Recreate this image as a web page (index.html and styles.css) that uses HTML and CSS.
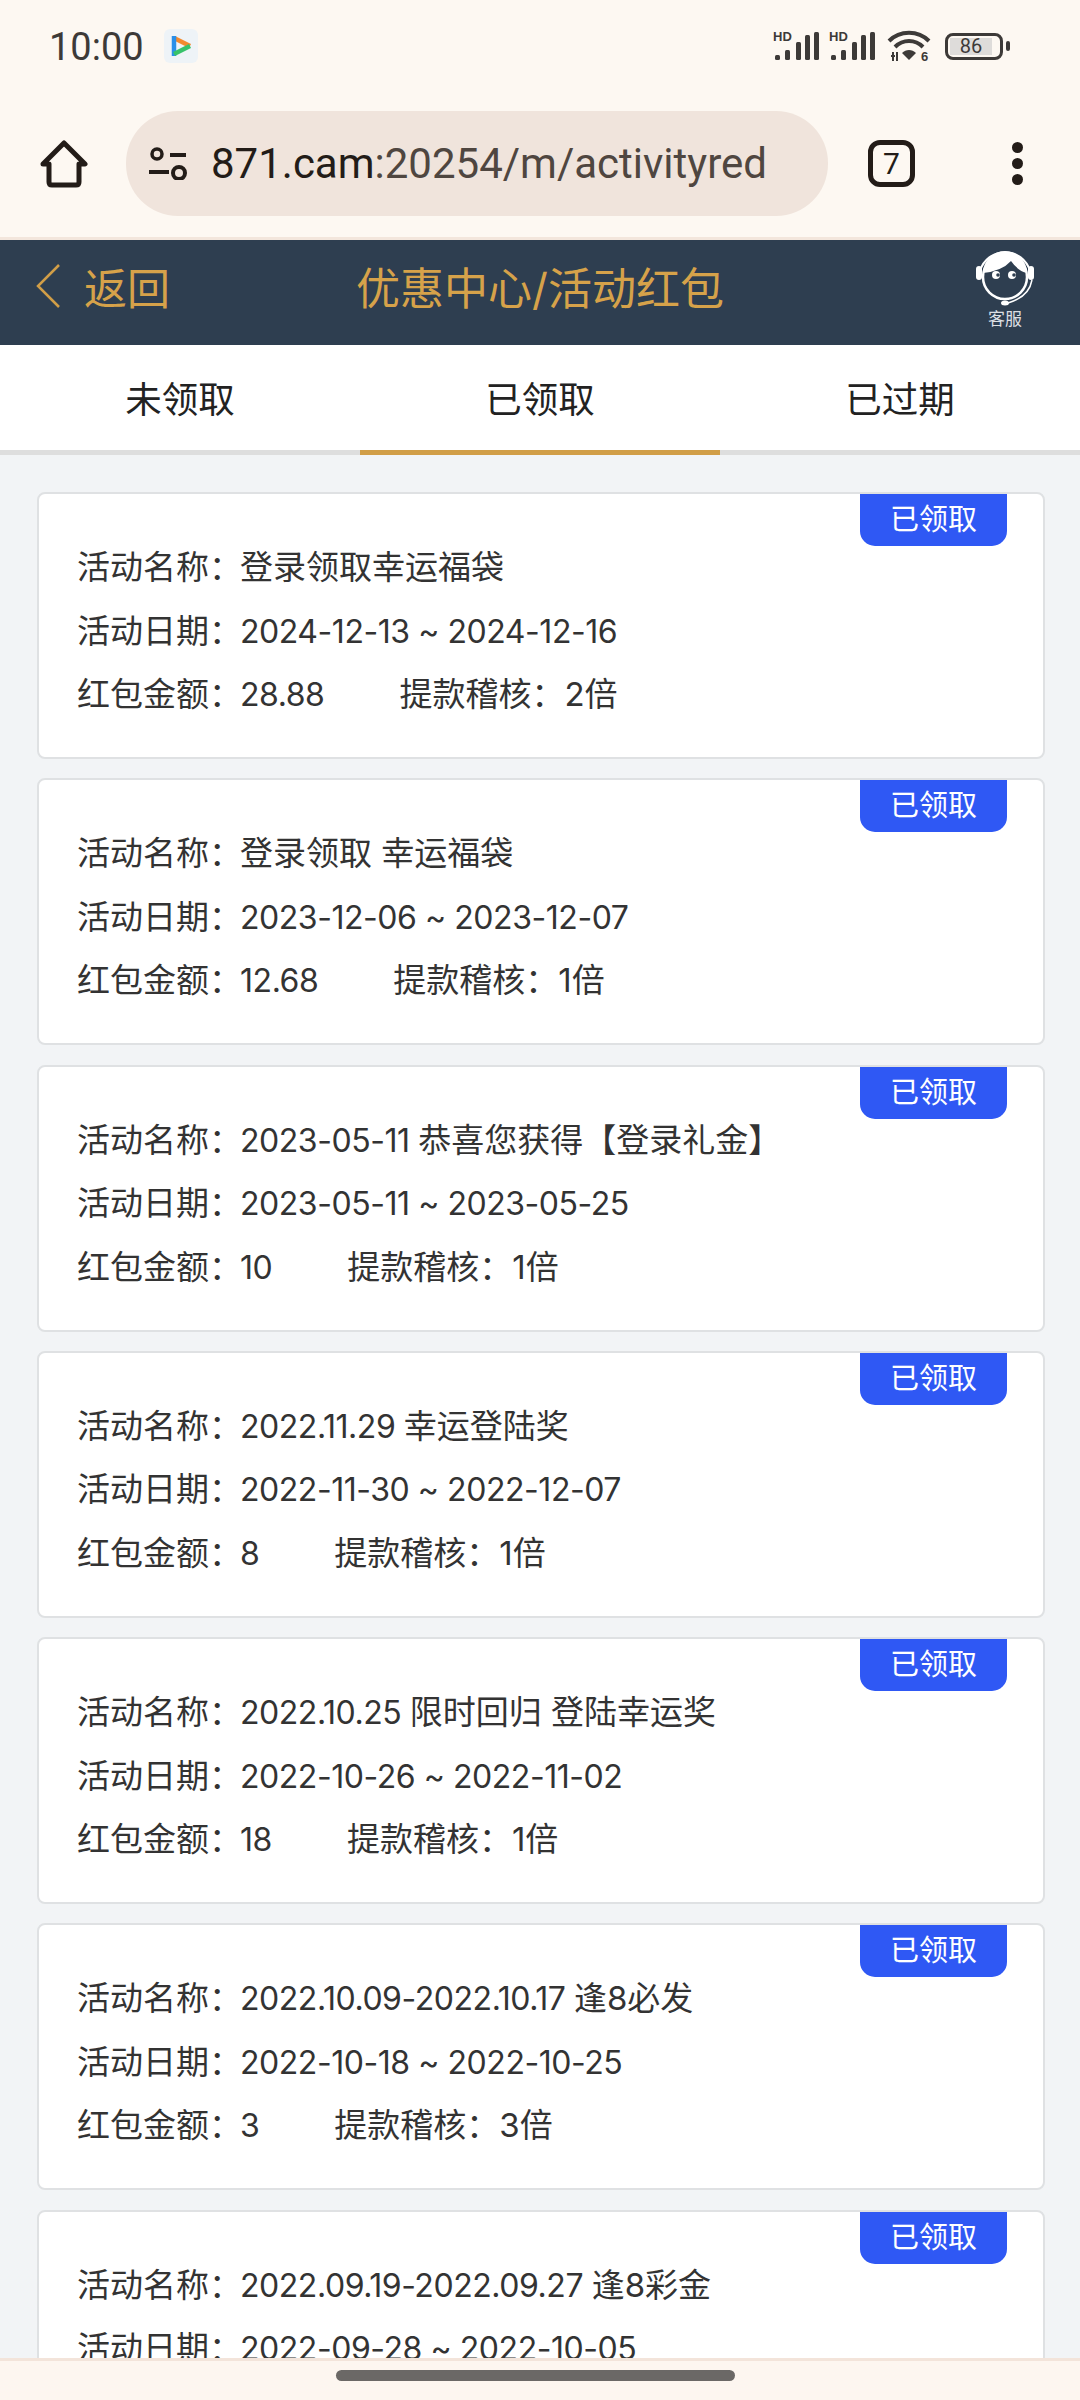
FILE: index.html
```html
<!DOCTYPE html>
<html lang="zh">
    <head>
        <meta charset="utf-8">
        <title>优惠中心/活动红包</title>
        <link rel="stylesheet" href="styles.css">
    </head>
    <body>
        <div class="phone">
            <div class="browser">
                <div class="status">
                    <span class="time">10:00</span>
                    <svg class="play" viewBox="0 0 34 34">
                        <rect width="34" height="34" rx="6" fill="#eef3f7"/>
                        <path d="M10 9L26 17" stroke="#f28a2e" stroke-width="4.5" fill="none"/>
                        <path d="M10 7V27" stroke="#2a8fe8" stroke-width="4.5" fill="none"/>
                        <path d="M10 25L26 17" stroke="#37c26a" stroke-width="4.5" fill="none"/>
                    </svg>
                    <div class="indicators">
                        <svg class="signal" viewBox="0 -2 46 32">
                            <text x="0" y="10" class="hd">HD</text>
                            <rect x="2" y="24" width="5" height="5" rx="1.5"/>
                            <rect x="12" y="19" width="5" height="10" rx="1.5"/>
                            <rect x="23" y="11" width="5" height="18" rx="1.5"/>
                            <rect x="32" y="4" width="5" height="25" rx="1.5"/>
                            <rect x="41" y="1" width="5" height="28" rx="1.5"/>
                        </svg>
                        <svg class="signal" viewBox="0 -2 46 32">
                            <text x="0" y="10" class="hd">HD</text>
                            <rect x="2" y="24" width="5" height="5" rx="1.5"/>
                            <rect x="12" y="19" width="5" height="10" rx="1.5"/>
                            <rect x="23" y="11" width="5" height="18" rx="1.5"/>
                            <rect x="32" y="4" width="5" height="25" rx="1.5"/>
                            <rect x="41" y="1" width="5" height="28" rx="1.5"/>
                        </svg>
                        <svg class="wifi" viewBox="0 0 44 36">
                            <path d="M2 11C13 0 31 0 42 11" fill="none" stroke="#3d3a38" stroke-width="4"/>
                            <path d="M8 17C16 9 28 9 36 17" fill="none" stroke="#3d3a38" stroke-width="4"/>
                            <path d="M15 23C19 19 25 19 29 23L22 30Z" fill="#3d3a38"/>
                            <path d="M4 26H8M6 22V31M10 22V31" stroke="#3d3a38" stroke-width="2" fill="none"/>
                            <text x="34" y="31" class="wifi-six">6</text>
                        </svg>
                        <div class="battery">
                            <span class="battery-level">86</span>
                        </div>
                        <span class="battery-tip"></span>
                    </div>
                </div>
                <div class="toolbar">
                    <svg class="home" viewBox="0 0 48 48">
                        <path d="M3 24L24 3L45 24H39V42Q39 45 36 45H12Q9 45 9 42V24Z" fill="none" stroke="#231c18" stroke-width="5" stroke-linejoin="round"/>
                    </svg>
                    <div class="urlbar">
                        <svg class="tune" viewBox="0 0 39 33">
                            <circle cx="9" cy="7" r="5" fill="none" stroke="#231c18" stroke-width="3.5"/>
                            <path d="M22 8H38" stroke="#231c18" stroke-width="4"/>
                            <path d="M1 25H21" stroke="#231c18" stroke-width="4"/>
                            <circle cx="31" cy="26" r="6" fill="none" stroke="#231c18" stroke-width="4"/>
                        </svg>
                        <span class="url"><b>871.cam</b>:20254/m/activityred</span>
                    </div>
                    <div class="tabcount">7</div>
                    <div class="dots"><i></i><i></i><i></i></div>
                </div>
            </div>

            <div class="header">
                <div class="back">
                    <svg class="chevron" viewBox="0 0 24 44">
                        <path d="M23 1L2 22L23 43" fill="none" stroke="#d19e47" stroke-width="2.5"/>
                    </svg>
                    <span>返回</span>
                </div>
                <div class="title">优惠中心/活动红包</div>
                <div class="service">
                    <svg class="agent" viewBox="0 0 60 60">
                        <path d="M5 24A26 26 0 0 1 55 24" fill="none" stroke="#fff" stroke-width="2"/>
                        <path d="M8 26A22 22 0 0 1 52 26Q43 24 36 14Q27 24 8 26Z" fill="#fff"/>
                        <circle cx="30" cy="30" r="22" fill="none" stroke="#fff" stroke-width="2.5"/>
                        <rect x="1" y="19" width="6" height="14" rx="3" fill="#fff"/>
                        <rect x="53" y="19" width="6" height="14" rx="3" fill="#fff"/>
                        <circle cx="21" cy="28" r="4" fill="#fff"/>
                        <circle cx="37" cy="28" r="4" fill="#fff"/>
                        <circle cx="23" cy="28" r="1.8" fill="#2e3e50"/>
                        <circle cx="39" cy="28" r="1.8" fill="#2e3e50"/>
                        <path d="M57 33Q54 50 33 56" fill="none" stroke="#fff" stroke-width="1.5"/>
                        <ellipse cx="30" cy="56" rx="4" ry="2.5" fill="#fff"/>
                    </svg>
                    <span class="service-label">客服</span>
                </div>
            </div>

            <div class="tabs">
                <div class="tab">未领取</div>
                <div class="tab active">已领取</div>
                <div class="tab">已过期</div>
            </div>

            <div class="list">
                <div class="card">
                    <span class="badge">已领取</span>
                    <p><span class="label">活动名称：</span><span class="cn">登录领取幸运福袋</span></p>
                    <p><span class="label">活动日期：</span>2024-12-13 ~ 2024-12-16</p>
                    <p><span class="label">红包金额：</span>28.88<span class="audit">提款稽核：2倍</span></p>
                </div>
                <div class="card">
                    <span class="badge">已领取</span>
                    <p><span class="label">活动名称：</span><span class="cn">登录领取 幸运福袋</span></p>
                    <p><span class="label">活动日期：</span>2023-12-06 ~ 2023-12-07</p>
                    <p><span class="label">红包金额：</span>12.68<span class="audit">提款稽核：1倍</span></p>
                </div>
                <div class="card">
                    <span class="badge">已领取</span>
                    <p><span class="label">活动名称：</span>2023-05-11 <span class="cn">恭喜您获得【登录礼金】</span></p>
                    <p><span class="label">活动日期：</span>2023-05-11 ~ 2023-05-25</p>
                    <p><span class="label">红包金额：</span>10<span class="audit">提款稽核：1倍</span></p>
                </div>
                <div class="card">
                    <span class="badge">已领取</span>
                    <p><span class="label">活动名称：</span>2022.11.29 <span class="cn">幸运登陆奖</span></p>
                    <p><span class="label">活动日期：</span>2022-11-30 ~ 2022-12-07</p>
                    <p><span class="label">红包金额：</span>8<span class="audit">提款稽核：1倍</span></p>
                </div>
                <div class="card">
                    <span class="badge">已领取</span>
                    <p><span class="label">活动名称：</span>2022.10.25 <span class="cn">限时回归 登陆幸运奖</span></p>
                    <p><span class="label">活动日期：</span>2022-10-26 ~ 2022-11-02</p>
                    <p><span class="label">红包金额：</span>18<span class="audit">提款稽核：1倍</span></p>
                </div>
                <div class="card">
                    <span class="badge">已领取</span>
                    <p><span class="label">活动名称：</span>2022.10.09-2022.10.17 <span class="cn">逢8必发</span></p>
                    <p><span class="label">活动日期：</span>2022-10-18 ~ 2022-10-25</p>
                    <p><span class="label">红包金额：</span>3<span class="audit">提款稽核：3倍</span></p>
                </div>
                <div class="card">
                    <span class="badge">已领取</span>
                    <p><span class="label">活动名称：</span>2022.09.19-2022.09.27 <span class="cn">逢8彩金</span></p>
                    <p><span class="label">活动日期：</span>2022-09-28 ~ 2022-10-05</p>
                </div>
            </div>

            <div class="navbar"><span class="handle"></span></div>
        </div>
    </body>
</html>
```

FILE: styles.css
```css
body {
    margin: 0;
    font-family: "Inter", "Noto Sans CJK SC", sans-serif;
    color: #333333;
}

.phone {
    width: 1080px;
    height: 2400px;
    display: flex;
    flex-direction: column;
    overflow: hidden;
    background-color: #f2f4f6;
}

/* browser chrome */
.browser {
    height: 237px;
    flex: none;
    background-color: #fdf8f2;
    border-bottom: 3px solid #f3e6dc;
}

.status {
    height: 111px;
    box-sizing: border-box;
    padding: 29px 0 0 49px;
    display: flex;
    align-items: flex-start;
}

.time {
    font-family: "Roboto", sans-serif;
    font-size: 38px;
    line-height: 36px;
    color: #3d3a38;
}

.play {
    width: 34px;
    height: 34px;
    margin-left: 20px;
}

.indicators {
    margin-left: auto;
    margin-right: 70px;
    padding-top: 2px;
    display: flex;
    align-items: center;
    height: 30px;
}

.signal {
    width: 46px;
    height: 32px;
    margin: 0 10px 2px 0;
    fill: #3d3a38;
}

.hd {
    font-family: "Liberation Sans", sans-serif;
    font-size: 13px;
    font-weight: bold;
}

.wifi {
    width: 44px;
    height: 36px;
    margin: 0 0 -4px 2px;
}

.wifi-six {
    font-family: "Liberation Sans", sans-serif;
    font-size: 13px;
    font-weight: bold;
    fill: #3d3a38;
}

.battery {
    box-sizing: border-box;
    width: 58px;
    height: 27px;
    margin-left: 14px;
    border: 3px solid #3d3a38;
    border-radius: 8px;
    padding: 2px 8px 2px 2px;
    display: flex;
}

.battery-level {
    flex: 1;
    background-color: #dedcda;
    font-family: "Roboto", sans-serif;
    font-size: 20px;
    line-height: 17px;
    text-align: center;
    color: #3d3a38;
}

.battery-tip {
    width: 4px;
    height: 10px;
    margin-left: 3px;
    border-radius: 2px;
    background-color: #3d3a38;
}

.toolbar {
    height: 105px;
    display: flex;
    align-items: center;
}

.home {
    width: 48px;
    height: 48px;
    margin-left: 40px;
}

.urlbar {
    width: 702px;
    height: 105px;
    margin-left: 38px;
    box-sizing: border-box;
    padding-left: 22px;
    border-radius: 52px;
    background-color: #f0e4dc;
    display: flex;
    align-items: center;
}

.tune {
    width: 39px;
    height: 33px;
}

.url {
    margin-left: 24px;
    font-family: "Roboto", sans-serif;
    font-size: 42px;
    color: #4f4640;
    white-space: nowrap;
}

.url b {
    font-weight: normal;
    color: #231c18;
}

.tabcount {
    box-sizing: border-box;
    width: 47px;
    height: 47px;
    margin-left: 40px;
    border: 5px solid #231c18;
    border-radius: 12px;
    font-family: "Roboto", sans-serif;
    font-size: 30px;
    line-height: 37px;
    text-align: center;
    color: #231c18;
}

.dots {
    margin-left: 97px;
    display: flex;
    flex-direction: column;
    gap: 5px;
}

.dots i {
    width: 11px;
    height: 11px;
    border-radius: 50%;
    background-color: #231c18;
}

/* page header */
.header {
    height: 105px;
    flex: none;
    box-sizing: border-box;
    padding-bottom: 17px;
    display: grid;
    grid-template-columns: 1fr auto 1fr;
    align-items: center;
    background-color: #2e3e50;
    color: #d6a24a;
}

.back {
    display: flex;
    align-items: center;
    margin-left: 36px;
    font-size: 43px;
}

.chevron {
    width: 24px;
    height: 44px;
    margin-right: 24px;
}

.title {
    font-size: 44px;
}

.service {
    justify-self: end;
    align-self: start;
    margin: 7px 45px 0 0;
    display: flex;
    flex-direction: column;
    align-items: center;
}

.agent {
    width: 60px;
    height: 60px;
}

.service-label {
    font-size: 17px;
    line-height: 24px;
    color: #dcdfe3;
}

/* tabs */
.tabs {
    height: 110px;
    flex: none;
    display: flex;
    box-sizing: border-box;
    background-color: #ffffff;
    border-bottom: 5px solid #dedede;
}

.tab {
    flex: 1;
    height: 110px;
    box-sizing: border-box;
    text-align: center;
    font-size: 36.5px;
    line-height: 110px;
    color: #222222;
}

.tab.active {
    border-bottom: 5px solid #d19e47;
}

/* activity list */
.list {
    flex: 1;
    min-height: 0;
    overflow: hidden;
    padding: 37px 35px 0 37px;
    display: flex;
    flex-direction: column;
    gap: 19.3px;
}

.card {
    flex: none;
    height: 267px;
    box-sizing: border-box;
    position: relative;
    padding: 42px 38px 0;
    background-color: #ffffff;
    border: 2px solid #dfe1e3;
    border-radius: 8px;
}

.card p {
    height: 63.5px;
    margin: 0;
    font-size: 32px;
    line-height: 63.5px;
    letter-spacing: -0.45px;
    color: #333333;
    white-space: nowrap;
}

.label {
    display: inline-block;
    width: 163px;
    font-size: 33px;
    letter-spacing: 0;
}

.cn {
    font-size: 33px;
    letter-spacing: 0;
}

.audit {
    margin-left: 75px;
    font-size: 33px;
    letter-spacing: 0;
}

.badge {
    position: absolute;
    top: 0;
    right: 36px;
    width: 147px;
    height: 52px;
    border-radius: 0 0 15px 15px;
    background-color: #2f58f4;
    color: #ffffff;
    font-size: 29px;
    line-height: 52px;
    text-align: center;
}

.navbar {
    height: 42px;
    flex: none;
    box-sizing: border-box;
    padding-top: 9px;
    background-color: #fdf6f0;
    border-top: 3px solid #f3e4da;
    display: flex;
    justify-content: center;
}

.handle {
    width: 399px;
    height: 11px;
    margin-right: 9px;
    border-radius: 6px;
    background-color: #6b6866;
}
```
